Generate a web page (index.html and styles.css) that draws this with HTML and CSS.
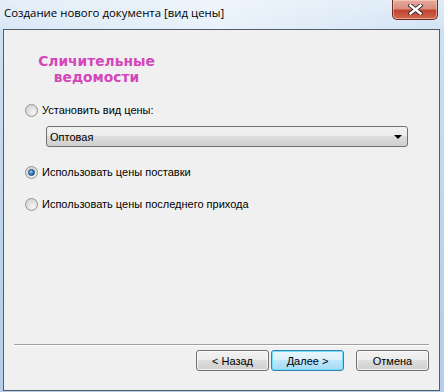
FILE: index.html
```html
<!DOCTYPE html>
<html>
<head>
    <meta charset="utf-8">
    <title>Создание нового документа [вид цены]</title>
    <link rel="stylesheet" href="styles.css">
</head>
<body>
    <div class="window">
        <div class="titlebar">
            <span class="title">Создание нового документа [вид цены]</span>
            <button class="close">
                <svg width="15" height="11" viewBox="0 0 15 11">
                    <path d="M2.5 1.5 L12.5 9.5 M12.5 1.5 L2.5 9.5" stroke="#3a2a28" stroke-width="4.2" stroke-linecap="square"/>
                    <path d="M2.5 1.5 L12.5 9.5 M12.5 1.5 L2.5 9.5" stroke="#fff" stroke-width="2.4" stroke-linecap="square"/>
                </svg>
            </button>
        </div>

        <div class="client">
            <h1 class="heading">Сличительные<br>ведомости</h1>

            <div class="option first">
                <span class="radio"></span>
                <span>Установить вид цены:</span>
            </div>
            <div class="combo">
                <span>Оптовая</span>
                <span class="arrow"></span>
            </div>

            <div class="option second">
                <span class="radio checked"></span>
                <span>Использовать цены поставки</span>
            </div>
            <div class="option third">
                <span class="radio"></span>
                <span>Использовать цены последнего прихода</span>
            </div>

            <div class="footer">
                <div class="separator"></div>
                <div class="buttons">
                    <button class="btn">&lt; Назад</button>
                    <button class="btn default">Далее &gt;</button>
                    <button class="btn cancel">Отмена</button>
                </div>
            </div>
        </div>
    </div>
</body>
</html>
```

FILE: styles.css
```css
* {
    margin: 0;
    padding: 0;
    box-sizing: border-box;
}
body {
    width: 444px;
    height: 392px;
    overflow: hidden;
    font-family: "Liberation Sans", Arial, sans-serif;
    font-size: 11px;
    color: #000;
}
.window {
    width: 444px;
    height: 392px;
    display: flex;
    flex-direction: column;
    padding: 0 4px 1px 3px;
    background: linear-gradient(180deg, #dbe9f6 0%, #cde0f3 8%, #bcd4ec 60%, #b4cee9 100%);
}
.titlebar {
    height: 29px;
    display: flex;
    align-items: flex-start;
    justify-content: space-between;
    background: linear-gradient(90deg, rgba(255,255,255,0.25), rgba(255,255,255,0.55) 50%, rgba(255,255,255,0.1));
    margin: 0 -4px 0 -3px;
    padding: 0 5px 0 4px;
}
.title {
    font-family: "Open Sans", "Noto Sans", sans-serif;
    font-size: 11.4px;
    margin-top: 5px;
    color: #000;
}
.close {
    width: 46px;
    height: 20px;
    border: 1px solid #6e2b24;
    border-top: 0;
    border-radius: 0 0 5px 5px;
    background: linear-gradient(180deg, #e6ab9e 0%, #d78e7e 45%, #c2432f 55%, #cf6b4f 100%);
    box-shadow: inset 0 0 0 1px rgba(255,220,210,0.5);
    display: flex;
    align-items: center;
    justify-content: center;
    margin-right: 1px;
}
.client {
    flex: 1;
    display: flex;
    flex-direction: column;
    background: #f0f0f0;
    border: 1px solid #535d69;
}
.heading {
    width: 145px;
    margin: 23px 0 0 20px;
    text-align: center;
    color: #d446bb;
    font-family: "DejaVu Sans", Verdana, sans-serif;
    font-size: 13.8px;
    font-weight: bold;
    line-height: 16px;
}
.option {
    display: flex;
    align-items: center;
    height: 16px;
    padding-left: 21px;
}
.option.first {
    margin-top: 17px;
}
.option.second {
    margin-top: 17px;
}
.option.third {
    margin-top: 16px;
}
.radio {
    width: 13px;
    height: 13px;
    border-radius: 50%;
    border: 1px solid #939393;
    background: radial-gradient(circle at 65% 70%, #f6f6f6 0%, #dedede 55%, #cfcfcf 100%);
    margin-right: 4px;
    display: flex;
    align-items: center;
    justify-content: center;
}
.radio.checked::after {
    content: "";
    width: 7px;
    height: 7px;
    border-radius: 50%;
    background: radial-gradient(circle at 35% 35%, #8dd0f5 0%, #2f85c5 50%, #1d4f8a 100%);
    border: 1px solid #1a3e6e;
    box-sizing: border-box;
}
.combo {
    display: flex;
    align-items: center;
    justify-content: space-between;
    height: 21px;
    margin: 8px 31px 0 42px;
    padding: 0 5px 0 3px;
    border: 1px solid #707070;
    border-radius: 3px;
    background: linear-gradient(180deg, #f2f2f2 0%, #ebebeb 49%, #dddddd 50%, #cfcfcf 100%);
}
.arrow {
    width: 0;
    height: 0;
    border-left: 4px solid transparent;
    border-right: 4px solid transparent;
    border-top: 4px solid #000;
    margin-top: 1px;
}
.footer {
    margin-top: auto;
    padding-bottom: 19px;
}
.separator {
    margin: 0 10px;
    border-top: 1px solid #a0a0a0;
    border-bottom: 1px solid #fff;
}
.buttons {
    display: flex;
    justify-content: flex-end;
    gap: 2px;
    margin-top: 4px;
    padding-right: 10px;
}
.btn {
    width: 73px;
    height: 21px;
    font-family: "Liberation Sans", Arial, sans-serif;
    font-size: 11px;
    color: #000;
    border: 1px solid #707070;
    border-radius: 3px;
    background: linear-gradient(180deg, #f2f2f2 0%, #ebebeb 49%, #dddddd 50%, #cfcfcf 100%);
    box-shadow: inset 0 0 0 1px rgba(255,255,255,0.7);
}
.btn.default {
    border-color: #3c7fb1;
    background: linear-gradient(180deg, #eaf6fd 0%, #d9f0fc 49%, #bee6fd 50%, #a7d9f5 100%);
    box-shadow: inset 0 0 0 1px #6fe0fb;
}
.btn.cancel {
    margin-left: 10px;
}
```
